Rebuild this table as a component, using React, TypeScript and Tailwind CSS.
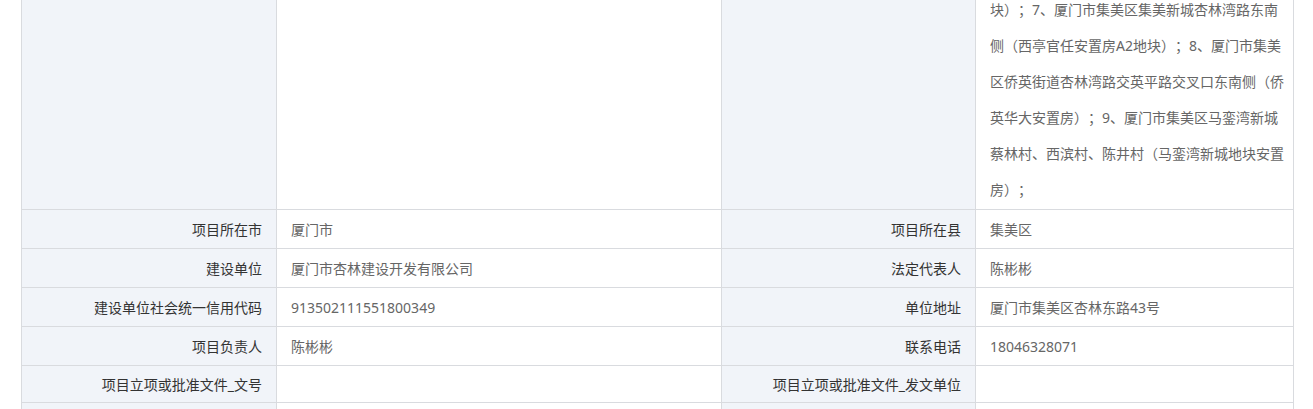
import React from "react";

const font = { fontFamily: '"Noto Sans", "Noto Sans CJK SC", sans-serif' };

function Label({ children, h }: { children?: React.ReactNode; h: string }) {
  return (
    <div
      className={`${h} bg-[#f1f4f9] border-r border-b border-[#d9dbdf] flex items-center justify-end pr-[14px] text-[14px] text-[#333333] whitespace-nowrap`}
    >
      {children}
    </div>
  );
}

function Value({ children, h }: { children?: React.ReactNode; h: string }) {
  return (
    <div
      className={`${h} bg-white border-r border-b border-[#d9dbdf] flex items-center pl-[14px] text-[14px] text-[#666666] whitespace-nowrap`}
    >
      {children}
    </div>
  );
}

const topLines = [
  "块）；7、厦门市集美区集美新城杏林湾路东南",
  "侧（西亭官任安置房A2地块）；8、厦门市集美",
  "区侨英街道杏林湾路交英平路交叉口东南侧（侨",
  "英华大安置房）；9、厦门市集美区马銮湾新城",
  "蔡林村、西滨村、陈井村（马銮湾新城地块安置",
  "房）；",
];

const rows: [string, string, string, string][] = [
  ["项目所在市", "厦门市", "项目所在县", "集美区"],
  ["建设单位", "厦门市杏林建设开发有限公司", "法定代表人", "陈彬彬"],
  ["建设单位社会统一信用代码", "913502111551800349", "单位地址", "厦门市集美区杏林东路43号"],
  ["项目负责人", "陈彬彬", "联系电话", "18046328071"],
];

export default function App() {
  return (
    <div
      className="w-[1313px] h-[409px] overflow-hidden bg-white pl-[21px] [text-spacing-trim:space-all]"
      style={font}
    >
      <div className="grid grid-cols-[255px_445px_254px_318px] w-[1273px] border-l border-[#d9dbdf]">
        {/* top tall row (scrolled) */}
        <Label h="h-[210px]" />
        <div className="h-[210px] bg-white border-r border-b border-[#d9dbdf]" />
        <Label h="h-[210px]" />
        <div className="h-[210px] bg-white border-r border-b border-[#d9dbdf] flex flex-col justify-end overflow-hidden pl-[14px] pb-[1px] text-[14px] text-[#666666]">
          {topLines.map((l, i) => (
            <div key={i} className="leading-[36px] whitespace-nowrap">
              {l}
            </div>
          ))}
        </div>

        {rows.map((r, i) => (
          <React.Fragment key={i}>
            <Label h="h-[39px]">{r[0]}</Label>
            <Value h="h-[39px]">{r[1]}</Value>
            <Label h="h-[39px]">{r[2]}</Label>
            <Value h="h-[39px]">{r[3]}</Value>
          </React.Fragment>
        ))}

        <Label h="h-[37px]">项目立项或批准文件_文号</Label>
        <Value h="h-[37px]" />
        <Label h="h-[37px]">项目立项或批准文件_发文单位</Label>
        <Value h="h-[37px]" />

        <Label h="h-[39px]" />
        <Value h="h-[39px]" />
        <Label h="h-[39px]" />
        <Value h="h-[39px]" />
      </div>
    </div>
  );
}
